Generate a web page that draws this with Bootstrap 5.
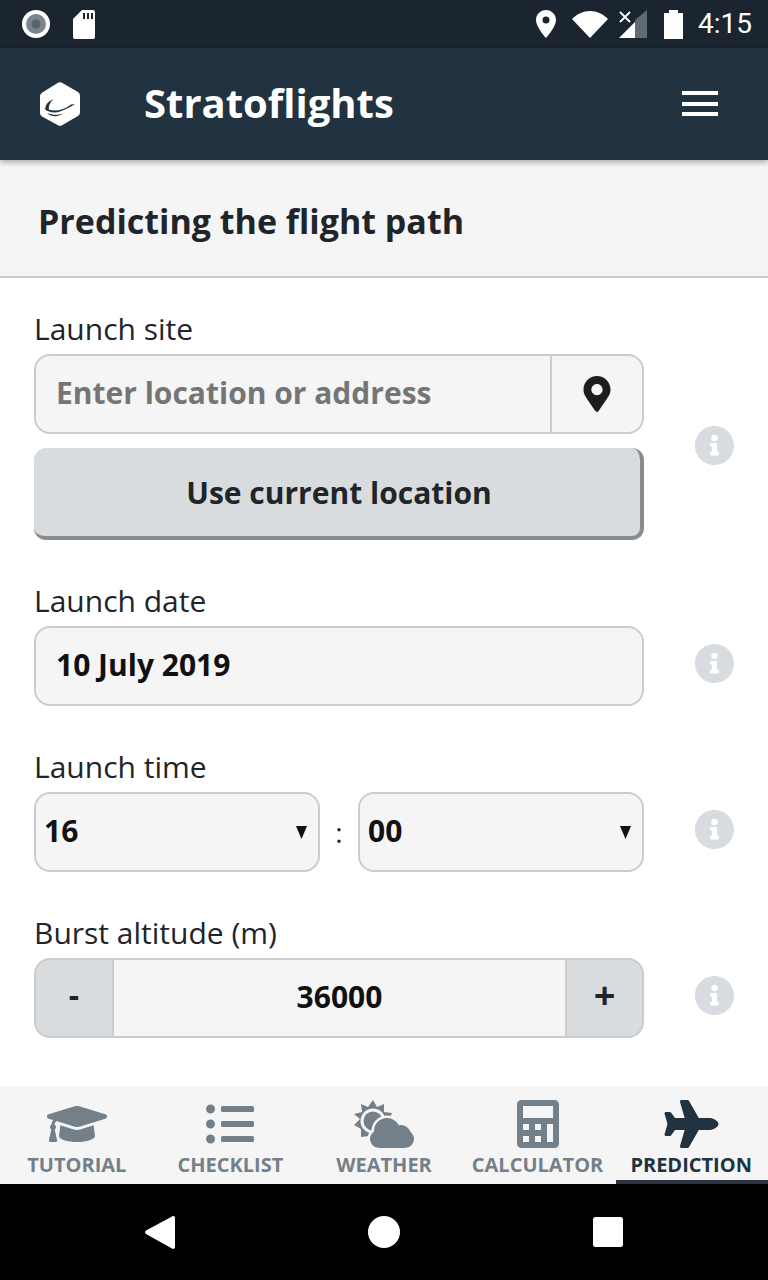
<!DOCTYPE html>
<html lang="en">
<head>
  <meta charset="UTF-8" />
  <meta name="viewport" content="width=device-width, initial-scale=1.0" />
  <title>Stratoflights</title>
  <link href="https://cdn.jsdelivr.net/npm/bootstrap@5.3.3/dist/css/bootstrap.min.css" rel="stylesheet" />
  <style>
    body {
      font-family: "Open Sans", "Noto Sans", sans-serif;
      color: #212529;
      background: #fff;
    }
    .app-shell { height: 1280px; overflow: hidden; }
    .status-bar { height: 48px; background: #1a2530; color: #fff; padding: 0 16px 0 22px; }
    .status-sd { margin-left: 23px; }
    .status-wifi { margin-left: 16px; }
    .status-signal { margin-left: 11px; }
    .status-batt { margin-left: 17px; }
    .status-time { font-family: Roboto, sans-serif; font-size: 28px; line-height: 1; margin-left: 15px; }
    .app-bar {
      height: 112px;
      background: #213240;
      padding: 0 50px 0 40px;
      box-shadow: 0 2px 6px rgba(0, 0, 0, .35);
      position: relative;
      z-index: 2;
    }
    .app-title { font-size: 40px; font-weight: 700; color: #fff; margin: 0 0 3px 64px; line-height: 1; }
    .burger { width: 36px; height: 25px; margin-bottom: 1px; }
    .burger span { display: block; height: 4px; background: #fff; }
    .page-band { height: 118px; background: #f5f5f5; border-bottom: 2px solid #ccc; padding: 6px 0 0 38px; }
    .page-band h1 { font-size: 34px; font-weight: 700; margin: 0; }
    .form-area { padding: 34px 34px 0; }
    .field-block { margin-bottom: 44px; }
    .field-label { font-size: 30px; line-height: 34px; padding-bottom: 8px; margin: 0; display: block; color: #212529; }
    .field-main { width: 610px; }
    .field-info { width: 39px; height: 39px; margin-left: 51px; margin-bottom: 6px; flex: none; }
    .field-info-tall { margin-bottom: 4px; }
    .box-input.form-control,
    .box-input.form-select {
      height: 80px;
      background-color: #f5f5f5;
      border: 2px solid #ccc;
      border-radius: 16px;
      font-size: 30px;
      font-weight: 700;
      color: #111;
      padding: 0 20px 3px;
      box-shadow: none;
    }
    .box-input::placeholder { color: #757575; opacity: 1; }
    .box-input.form-select {
      padding: 0 30px 3px 8px;
      background-image: url("data:image/svg+xml,%3csvg xmlns='http://www.w3.org/2000/svg' viewBox='0 0 11 13'%3e%3cpath d='M0 0h11L5.500 13z' fill='%23111'/%3e%3c/svg%3e");
      background-size: 11px 13px;
      background-position: right 11px center;
    }
    .input-group > .addon-pin {
      width: 93px;
      margin-left: 0;
      background: #f5f5f5;
      border: 2px solid #ccc;
      border-left: 0;
      border-radius: 0 16px 16px 0;
    }
    .addon-pin svg { width: 28px; height: 36px; }
    .input-group > .box-input.form-control { border-top-right-radius: 0; border-bottom-right-radius: 0; }
    .locate-btn.btn {
      display: block;
      width: 100%;
      height: 92px;
      margin-top: 14px;
      padding-left: 16px;
      background: #d9dcde;
      border: 0;
      border-right: 4px solid #888c8e;
      border-bottom: 4px solid #888c8e;
      border-radius: 12px;
      font-size: 30px;
      font-weight: 700;
      color: #212529;
    }
    .time-sep { width: 38px; text-align: center; font-size: 28px; flex: none; }
    .time-pick { width: 286px; flex: none; }
    .input-group > .step-btn.btn {
      width: 79px;
      height: 80px;
      margin-left: 0;
      background: #d9dcde;
      border: 2px solid #ccc;
      font-size: 32px;
      font-weight: 700;
      color: #212529;
      line-height: 1;
      padding: 0 0 6px;
    }
    .input-group > .step-btn.step-minus { width: 80px; border-radius: 16px 0 0 16px; }
    .input-group > .step-btn.step-plus { border-radius: 0 16px 16px 0; font-size: 38px; padding-bottom: 9px; }
    .input-group > .step-value.form-control {
      height: 80px;
      margin-left: 0;
      background: #f5f5f5;
      border: 2px solid #ccc;
      border-left: 0;
      border-right: 0;
      border-radius: 0;
      text-align: center;
      font-size: 30px;
      font-weight: 700;
      color: #111;
      padding: 0 12px 3px;
      box-shadow: none;
    }
    .tab-bar { height: 98px; background: #f5f5f5; }
    .tab-item {
      width: 20%;
      height: 98px;
      padding-top: 14px;
      color: #748089;
      text-decoration: none;
      font-size: 20px;
      font-weight: 700;
      line-height: 28px;
      text-align: center;
      white-space: nowrap;
    }
    .tab-item svg { display: block; margin: 0 auto 3px; height: 48px; fill: currentColor; }
    .tab-item.is-active { width: calc(20% - 2px); margin-left: 2px; padding-right: 2px; color: #213240; border-bottom: 4px solid #2d3340; }
    .nav-keys { height: 96px; background: #000; }
    .nav-key { width: 224px; display: flex; justify-content: center; }
  </style>
</head>
<body>
  <div class="app-shell d-flex flex-column">

    <!-- Android status bar -->
    <div class="status-bar d-flex align-items-center flex-shrink-0">
      <svg width="28" height="28" viewBox="0 0 28 28">
        <circle cx="14" cy="14" r="14" fill="#fff" />
        <circle cx="14" cy="14" r="10" fill="#7a858e" />
        <circle cx="14" cy="14" r="4.500" fill="#56626c" />
      </svg>
      <svg class="status-sd" width="22" height="29" viewBox="0 0 22 29">
        <path d="M9 0h11a2 2 0 0 1 2 2v25a2 2 0 0 1-2 2H2a2 2 0 0 1-2-2V9z" fill="#fff" />
        <path d="M10 3h2v6h-2zM14 3h2v6h-2zM18 3h2v6h-2z" fill="#1a2530" />
      </svg>
      <div class="ms-auto d-flex align-items-center">
        <svg width="20" height="28" viewBox="0 0 20 28">
          <path fill-rule="evenodd" d="M10 0c5.500 0 10 4.400 10 10 0 7-10 18-10 18S0 17 0 10C0 4.400 4.500 0 10 0zm0 6.500a3.500 3.500 0 1 0 0 7 3.500 3.500 0 0 0 0-7z" fill="#fff" />
        </svg>
        <svg class="status-wifi" width="36" height="28" viewBox="0 0 36 28">
          <path d="M0 9C5 4 11 1 18 1s13 3 18 8L18 28z" fill="#fff" />
        </svg>
        <svg class="status-signal" width="28" height="28" viewBox="0 0 28 28">
          <path d="M28 0v28H16V10z" fill="#5f6a74" />
          <path d="M0 28 16 12v16z" fill="#fff" />
          <path d="M1 2l10 10M11 2 1 12" stroke="#fff" stroke-width="1.800" />
        </svg>
        <svg class="status-batt" width="19" height="29" viewBox="0 0 19 29">
          <path d="M5 3V0h9v3h5v26H0V3z" fill="#fff" />
        </svg>
        <span class="status-time">4:15</span>
      </div>
    </div>

    <!-- App bar -->
    <header class="app-bar d-flex align-items-center flex-shrink-0">
      <svg width="40" height="44" viewBox="0 0 40 44">
        <path d="M18 .8a4 4 0 0 1 4 0l16 9.300a4 4 0 0 1 2 3.400v17a4 4 0 0 1-2 3.400l-16 9.300a4 4 0 0 1-4 0L2 34.500a4 4 0 0 1-2-3.400v-17a4 4 0 0 1 2-3.400z" fill="#fff" />
        <path d="M14 17C8 19 4 24 6 28c1.500 1 2.500 1 3.500 1C7.500 25 10 20 14 17z" fill="#213240" />
        <path d="M4 26c3 4 10 6 16 3.500 6-2 11-5 15-7.500l-4 .5c-5 4-11 6-16 6-4 0-8-1-11-2.500z" fill="#213240" />
        <path d="M7 31c4 4 11 4.500 16 .5-5 2-11 1.500-16-.5z" fill="#213240" />
      </svg>
      <h2 class="app-title">Stratoflights</h2>
      <div class="burger ms-auto d-flex flex-column justify-content-between">
        <span></span><span></span><span></span>
      </div>
    </header>

    <div class="page-band d-flex align-items-center flex-shrink-0">
      <h1>Predicting the flight path</h1>
    </div>

    <main class="form-area flex-grow-1">
      <div class="field-block">
        <label class="field-label" for="siteInput">Launch site</label>
        <div class="d-flex align-items-center">
          <div class="field-main">
            <div class="input-group">
              <input id="siteInput" class="form-control box-input" type="text" placeholder="Enter location or address" />
              <span class="addon-pin d-flex align-items-center justify-content-center">
                <svg viewBox="0 0 384 512"><path fill="#1d1d1f" d="M172.268 501.670C26.970 291.031 0 262.449 0 192 0 85.961 85.961 0 192 0s192 85.961 192 192c0 70.449-26.970 99.031-172.268 309.670-9.535 13.774-29.930 13.773-39.464 0zM192 272c44.183 0 80-35.817 80-80s-35.817-80-80-80-80 35.817-80 80 35.817 80 80 80z" /></svg>
              </span>
            </div>
            <button class="btn locate-btn" type="button">Use current location</button>
          </div>
          <svg class="field-info field-info-tall" viewBox="8 8 496 496"><path fill="#d8dbdf" d="M256 8C119 8 8 119 8 256s111 248 248 248 248-111 248-248S393 8 256 8zm0 110c23.200 0 42 18.800 42 42s-18.800 42-42 42-42-18.800-42-42 18.800-42 42-42zm56 254c0 6.600-5.400 12-12 12h-88c-6.600 0-12-5.400-12-12v-24c0-6.600 5.400-12 12-12h12v-64h-12c-6.600 0-12-5.400-12-12v-24c0-6.600 5.400-12 12-12h64c6.600 0 12 5.400 12 12v100h12c6.600 0 12 5.400 12 12v24z" /></svg>
        </div>
      </div>

      <div class="field-block">
        <label class="field-label" for="dateInput">Launch date</label>
        <div class="d-flex align-items-center">
          <div class="field-main">
            <input id="dateInput" class="form-control box-input" type="text" value="10 July 2019" />
          </div>
          <svg class="field-info" viewBox="8 8 496 496"><path fill="#d8dbdf" d="M256 8C119 8 8 119 8 256s111 248 248 248 248-111 248-248S393 8 256 8zm0 110c23.200 0 42 18.800 42 42s-18.800 42-42 42-42-18.800-42-42 18.800-42 42-42zm56 254c0 6.600-5.400 12-12 12h-88c-6.600 0-12-5.400-12-12v-24c0-6.600 5.400-12 12-12h12v-64h-12c-6.600 0-12-5.400-12-12v-24c0-6.600 5.400-12 12-12h64c6.600 0 12 5.400 12 12v100h12c6.600 0 12 5.400 12 12v24z" /></svg>
        </div>
      </div>

      <div class="field-block">
        <label class="field-label" for="hourSelect">Launch time</label>
        <div class="d-flex align-items-center">
          <div class="field-main d-flex align-items-center">
            <div class="time-pick">
              <select id="hourSelect" class="form-select box-input"><option>16</option></select>
            </div>
            <span class="time-sep">:</span>
            <div class="time-pick">
              <select class="form-select box-input"><option>00</option></select>
            </div>
          </div>
          <svg class="field-info" viewBox="8 8 496 496"><path fill="#d8dbdf" d="M256 8C119 8 8 119 8 256s111 248 248 248 248-111 248-248S393 8 256 8zm0 110c23.200 0 42 18.800 42 42s-18.800 42-42 42-42-18.800-42-42 18.800-42 42-42zm56 254c0 6.600-5.400 12-12 12h-88c-6.600 0-12-5.400-12-12v-24c0-6.600 5.400-12 12-12h12v-64h-12c-6.600 0-12-5.400-12-12v-24c0-6.600 5.400-12 12-12h64c6.600 0 12 5.400 12 12v100h12c6.600 0 12 5.400 12 12v24z" /></svg>
        </div>
      </div>

      <div class="field-block">
        <label class="field-label" for="burstInput">Burst altitude (m)</label>
        <div class="d-flex align-items-center">
          <div class="field-main">
            <div class="input-group">
              <button class="btn step-btn step-minus" type="button">-</button>
              <input id="burstInput" class="form-control step-value" type="text" value="36000" />
              <button class="btn step-btn step-plus" type="button">+</button>
            </div>
          </div>
          <svg class="field-info" viewBox="8 8 496 496"><path fill="#d8dbdf" d="M256 8C119 8 8 119 8 256s111 248 248 248 248-111 248-248S393 8 256 8zm0 110c23.200 0 42 18.800 42 42s-18.800 42-42 42-42-18.800-42-42 18.800-42 42-42zm56 254c0 6.600-5.400 12-12 12h-88c-6.600 0-12-5.400-12-12v-24c0-6.600 5.400-12 12-12h12v-64h-12c-6.600 0-12-5.400-12-12v-24c0-6.600 5.400-12 12-12h64c6.600 0 12 5.400 12 12v100h12c6.600 0 12 5.400 12 12v24z" /></svg>
        </div>
      </div>
    </main>

    <!-- Bottom tabs -->
    <nav class="tab-bar d-flex flex-shrink-0">
      <a class="tab-item" href="#">
        <svg width="60" viewBox="0 0 640 512"><path d="M622.340 153.200L343.400 67.500c-15.200-4.670-31.600-4.670-46.790 0L17.660 153.200c-23.540 7.230-23.540 38.360 0 45.590l48.630 14.940c-10.670 13.190-17.230 29.280-17.880 46.900C38.780 266.150 32 276.110 32 288c0 10.780 5.680 19.850 13.860 25.650L20.330 428.530C18.110 438.520 25.710 448 35.940 448h56.110c10.240 0 17.840-9.480 15.620-19.470L82.140 313.650C90.320 307.850 96 298.780 96 288c0-11.570-6.470-21.250-15.660-26.870.76-15.020 8.440-28.300 20.690-36.720L296.600 284.500c9.060 2.780 26.440 6.250 46.790 0l278.950-85.700c23.550-7.240 23.550-38.360 0-45.600zM352.790 315.090c-28.530 8.760-52.840 3.920-65.590 0l-145.020-44.550L128 384c0 35.350 85.960 64 192 64s192-28.650 192-64l-14.180-113.470-145.030 44.560z" /></svg>
        TUTORIAL
      </a>
      <a class="tab-item" href="#">
        <svg width="48" viewBox="0 0 512 512"><path d="M48 48a48 48 0 1 0 48 48 48 48 0 0 0-48-48zm0 160a48 48 0 1 0 48 48 48 48 0 0 0-48-48zm0 160a48 48 0 1 0 48 48 48 48 0 0 0-48-48zm448 16H176a16 16 0 0 0-16 16v32a16 16 0 0 0 16 16h320a16 16 0 0 0 16-16v-32a16 16 0 0 0-16-16zm0-320H176a16 16 0 0 0-16 16v32a16 16 0 0 0 16 16h320a16 16 0 0 0 16-16V80a16 16 0 0 0-16-16zm0 160H176a16 16 0 0 0-16 16v32a16 16 0 0 0 16 16h320a16 16 0 0 0 16-16v-32a16 16 0 0 0-16-16z" /></svg>
        CHECKLIST
      </a>
      <a class="tab-item" href="#">
        <svg width="60" viewBox="0 0 60 48">
          <path d="M19 0l4 7 7-3 0 8 8 1-3 7 4 4-7 5-1 8-8-1-4 6-4-6-8 1 0-8-7-4 6-6L0 14l8-2-1-8 7 3z" />
          <circle cx="19" cy="21" r="12.500" fill="#f5f5f5" />
          <circle cx="19" cy="21" r="9.500" />
          <g stroke="#f5f5f5" stroke-width="5">
            <circle cx="33" cy="31" r="13" /><circle cx="47" cy="35" r="10" /><circle cx="25" cy="39" r="9" /><circle cx="51" cy="39" r="9" />
          </g>
          <circle cx="33" cy="31" r="13" /><circle cx="47" cy="35" r="10" /><circle cx="25" cy="39" r="9" /><circle cx="51" cy="39" r="9" />
          <rect x="25" y="34" width="26" height="14" />
        </svg>
        WEATHER
      </a>
      <a class="tab-item" href="#">
        <svg width="42" viewBox="0 0 448 512"><path fill-rule="evenodd" d="M48 0h352c26 0 48 22 48 48v416c0 26-22 48-48 48H48c-26 0-48-22-48-48V48C0 22 22 0 48 0zm16 64v128h320V64zm0 192v64h64v-64zm128 0v64h64v-64zm128 0v192h64V256zM64 384v64h64v-64zm128 0v64h64v-64z" /></svg>
        CALCULATOR
      </a>
      <a class="tab-item is-active" href="#">
        <svg width="55" viewBox="0 0 576 512"><path d="M480 192H365.710L260.610 8.060A16.014 16.014 0 0 0 246.710 0h-65.500c-10.630 0-18.300 10.170-15.380 20.390L214.860 192H112l-43.200-57.600c-3.020-4.030-7.770-6.400-12.800-6.400H16.010C5.600 128-2.040 137.780.49 147.880L32 256 .49 364.120C-2.040 374.220 5.600 384 16.010 384H56c5.040 0 9.780-2.370 12.800-6.400L112 320h102.860l-49.030 171.600c-2.920 10.220 4.750 20.400 15.380 20.400h65.500c5.740 0 11.040-3.080 13.890-8.060L365.710 320H480c35.350 0 96-28.650 96-64s-60.650-64-96-64z" /></svg>
        PREDICTION
      </a>
    </nav>

    <!-- Android navigation keys -->
    <div class="nav-keys d-flex align-items-center justify-content-center flex-shrink-0">
      <div class="nav-key">
        <svg width="30" height="33" viewBox="0 0 30 33"><path d="M27 .5c1.500-1 3 0 3 1.500v29c0 1.500-1.500 2.500-3 1.500L1 18c-1.300-.8-1.300-2.700 0-3.500z" fill="#fff" /></svg>
      </div>
      <div class="nav-key">
        <svg width="32" height="32" viewBox="0 0 32 32"><circle cx="16" cy="16" r="16" fill="#fff" /></svg>
      </div>
      <div class="nav-key">
        <svg width="30" height="30" viewBox="0 0 30 30"><rect width="30" height="30" rx="2.500" fill="#fff" /></svg>
      </div>
    </div>
  </div>

  <script src="https://cdn.jsdelivr.net/npm/bootstrap@5.3.3/dist/js/bootstrap.bundle.min.js"></script>
</body>
</html>
